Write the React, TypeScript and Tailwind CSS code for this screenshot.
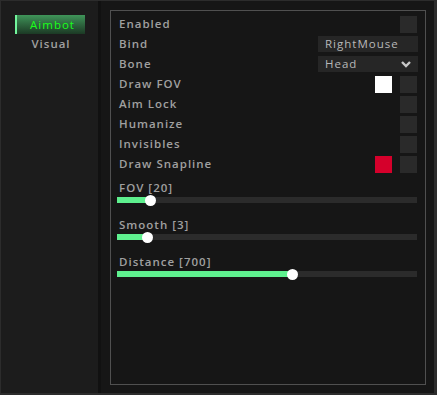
import React from "react";

const font = { fontFamily: '"Open Sans", "DejaVu Sans", sans-serif' };

type Row =
  | { label: string; kind: "check" }
  | { label: string; kind: "color"; color: string }
  | { label: string; kind: "bind"; value: string }
  | { label: string; kind: "select"; value: string };

const rows: Row[] = [
  { label: "Enabled", kind: "check" },
  { label: "Bind", kind: "bind", value: "RightMouse" },
  { label: "Bone", kind: "select", value: "Head" },
  { label: "Draw FOV", kind: "color", color: "#ffffff" },
  { label: "Aim Lock", kind: "check" },
  { label: "Humanize", kind: "check" },
  { label: "Invisibles", kind: "check" },
  { label: "Draw Snapline", kind: "color", color: "#d5002b" },
];

const sliders = [
  { label: "FOV", value: 20, max: 180 },
  { label: "Smooth", value: 3, max: 30 },
  { label: "Distance", value: 700, max: 1200 },
];

function Checkbox() {
  return <div className="w-[17px] h-[17px] bg-[#2a2a2a]" />;
}

function SettingRow({ row }: { row: Row }) {
  return (
    <div className="flex items-center h-[20px] pl-[2px]">
      <span className="flex-1 text-[11.5px] font-semibold tracking-[1px] text-[#a0a0a0]">
        {row.label}
      </span>
      {row.kind === "check" && <Checkbox />}
      {row.kind === "color" && (
        <div className="flex items-center gap-[8px]">
          <div className="w-[17px] h-[17px]" style={{ background: row.color }} />
          <Checkbox />
        </div>
      )}
      {row.kind === "bind" && (
        <div className="w-[100px] h-[16px] bg-[#262626] flex items-center pl-[7px] mr-[-1px] text-[11.5px] font-medium tracking-[1px] text-[#b8b8b8]">
          {row.value}
        </div>
      )}
      {row.kind === "select" && (
        <div className="w-[100px] h-[16px] bg-[#262626] flex items-center pl-[7px] pr-[7px] mr-[-1px] text-[11.5px] font-medium tracking-[1px] text-[#b8b8b8]">
          <span className="flex-1">{row.value}</span>
          <svg width="10" height="8" viewBox="0 0 10 8" aria-hidden="true">
            <path d="M1 2l4 4 4-4" fill="none" stroke="#c8c8c8" strokeWidth={2.4} />
          </svg>
        </div>
      )}
    </div>
  );
}

function Slider({ label, value, max }: { label: string; value: number; max: number }) {
  const pct = (value / max) * 100;
  return (
    <div className="flex flex-col">
      <span className="h-[14px] leading-[14px] pl-[2px] mt-[1px] text-[11.5px] font-semibold tracking-[1px] text-[#a0a0a0]">
        {label} [{value}]
      </span>
      <div className="relative mt-[2px] h-[6px] bg-[#2b2b2b]">
        <div className="h-full bg-[#5ef08e]" style={{ width: `${pct}%` }} />
        <div
          className="absolute top-1/2 w-[11px] h-[11px] -mt-[5.5px] -ml-[5.5px] rounded-full bg-white"
          style={{ left: `${pct}%` }}
        />
      </div>
    </div>
  );
}

export default function App() {
  return (
    <div
      className="w-[437px] h-[395px] flex border-l border-t border-r-[3px] border-b-[2px] border-[#2c2c2c] bg-[#161616]"
      style={font}
    >
      {/* Sidebar tabs */}
      <div className="w-[100px] bg-[#1c1c1c] border-r-[3px] border-[#111111] pt-[14px] pl-[14px] flex flex-col">
        <div className="flex h-[19px] w-[70px]">
          <div className="w-[2px] bg-[#72f59c]" />
          <div className="flex-1 flex items-center justify-center pl-[3px] bg-gradient-to-b from-[#3f9559] to-[#1c3a25] text-[11.5px] font-medium tracking-[1px] text-[#1aff1a]">
            Aimbot
          </div>
        </div>
        <div className="flex h-[20px] w-[70px] items-center justify-center pl-[2px] text-[11.5px] font-semibold tracking-[1px] text-[#a0a0a0]">
          Visual
        </div>
      </div>

      {/* Content */}
      <div className="flex-1 pl-[9px] pt-[9px] pr-[8px] pb-[8px]">
        <div className="h-full border border-[#505050] pt-[3px] pr-[8px] pl-[6px]">
          <div className="flex flex-col">
            {rows.map((r) => (
              <SettingRow key={r.label} row={r} />
            ))}
          </div>
          <div className="flex flex-col gap-[14px] mt-[6px]">
            {sliders.map((s) => (
              <Slider key={s.label} {...s} />
            ))}
          </div>
        </div>
      </div>
    </div>
  );
}
